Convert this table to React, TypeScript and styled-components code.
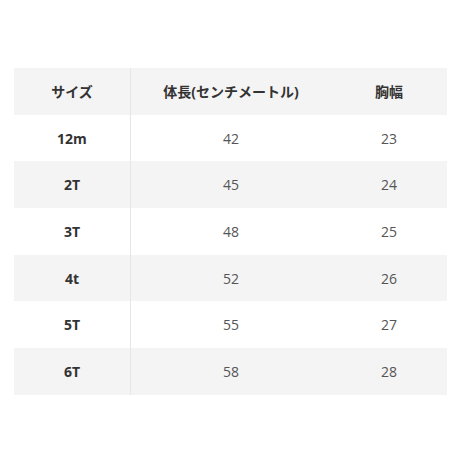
import styled, { createGlobalStyle } from "styled-components";

const GlobalStyle = createGlobalStyle`
  html, body {
    margin: 0;
    padding: 0;
    background: #fff;
  }
  body {
    font-family: "Open Sans", "Noto Sans CJK JP", sans-serif;
  }
`;

const rows = [
  { size: "12m", length: "42", chest: "23" },
  { size: "2T", length: "45", chest: "24" },
  { size: "3T", length: "48", chest: "25" },
  { size: "4t", length: "52", chest: "26" },
  { size: "5T", length: "55", chest: "27" },
  { size: "6T", length: "58", chest: "28" },
];

export default function App() {
  return (
    <>
      <GlobalStyle />
      <Page>
        <Table>
          <thead>
            <Row $shaded>
              <HeadCell $first>サイズ</HeadCell>
              <HeadCell>体長(センチメートル)</HeadCell>
              <HeadCell>胸幅</HeadCell>
            </Row>
          </thead>
          <tbody>
            {rows.map((r, i) => (
              <Row key={r.size} $shaded={i % 2 === 1}>
                <SizeCell>{r.size}</SizeCell>
                <Cell>{r.length}</Cell>
                <Cell>{r.chest}</Cell>
              </Row>
            ))}
          </tbody>
        </Table>
      </Page>
    </>
  );
}

const Page = styled.div`
  width: 460px;
  height: 460px;
  padding: 68px 14px 0;
  box-sizing: border-box;
`;

const Table = styled.table`
  width: 432px;
  border-collapse: collapse;
  table-layout: fixed;
`;

const Row = styled.tr<{ $shaded?: boolean }>`
  height: 46.7px;
  background: ${(p) => (p.$shaded ? "#f4f4f4" : "#ffffff")};
`;

const HeadCell = styled.th<{ $first?: boolean }>`
  padding: 0;
  text-align: center;
  font-weight: 700;
  font-size: 14px;
  color: #333;
  width: ${(p) => (p.$first ? "116px" : "auto")};
  &:first-child {
    border-right: 1px solid #e6e6e6;
  }
  &:nth-child(2) {
    width: 200px;
  }
  &:last-child {
    width: 116px;
  }
`;

const SizeCell = styled.td`
  padding: 0;
  text-align: center;
  font-weight: 700;
  font-size: 14px;
  color: #333;
  border-right: 1px solid #e6e6e6;
`;

const Cell = styled.td`
  padding: 0;
  text-align: center;
  font-weight: 400;
  font-size: 14px;
  color: #555;
`;
